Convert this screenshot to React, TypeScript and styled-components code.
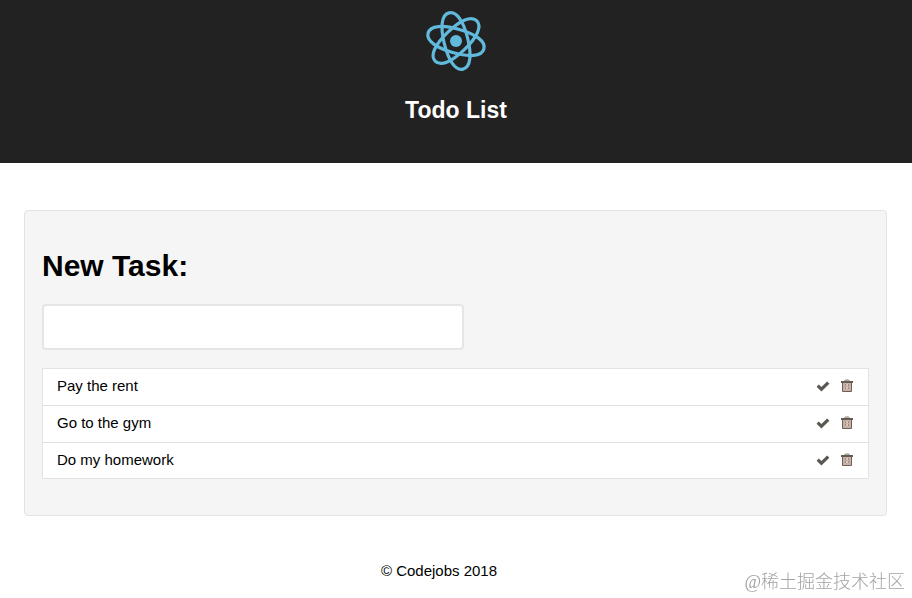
import React, { useState } from 'react';
import styled, { createGlobalStyle } from 'styled-components';

const GlobalStyle = createGlobalStyle`
  * { box-sizing: border-box; }
  body {
    margin: 0;
    background: #fff;
    color: #000;
    font-family: "Liberation Sans", Arial, Helvetica, sans-serif;
    font-size: 15px;
    line-height: 20px;
  }
`;

const Header = styled.header`
  display: flex;
  flex-direction: column;
  align-items: center;
  gap: 16px;
  padding: 1px 20px 39px;
  background: #222;
  color: #fff;
`;

const Logo = styled.svg`
  width: 80px;
  height: 80px;
  color: #61b9dc;
`;

const Title = styled.h1`
  margin: 0;
  font-size: 23px;
  line-height: 27px;
`;

const Panel = styled.main`
  margin: 47px 25px 0 24px;
  padding: 37px 17px 36px;
  border: 1px solid #e3e3e3;
  border-radius: 4px;
  background: #f5f5f5;
`;

const TaskLabel = styled.label`
  display: block;
  margin-bottom: 21px;
  font-size: 30px;
  font-weight: bold;
  line-height: 35px;
`;

const TaskInput = styled.input`
  display: block;
  width: 51%;
  height: 46px;
  padding: 8px 12px;
  border: 2px solid #e5e5e5;
  border-radius: 4px;
  background: #fff;
  font: inherit;
  outline: none;
`;

const TaskList = styled.ul`
  margin: 18px 0 0;
  padding: 0;
  border: 1px solid #e3e3e3;
  background: #fff;
  list-style: none;
`;

const TaskRow = styled.li`
  display: flex;
  align-items: center;
  justify-content: space-between;
  padding: 7px 14px 9px;

  & + & {
    border-top: 1px solid #e0e0e0;
  }

  &:last-child {
    padding-bottom: 8px;
  }
`;

const TaskText = styled.span<{ $done: boolean }>`
  text-decoration: ${({ $done }) => ($done ? 'line-through' : 'none')};
`;

const Actions = styled.div`
  display: flex;
  gap: 10px;
`;

const IconButton = styled.button`
  display: flex;
  width: 14px;
  height: 16px;
  padding: 0;
  border: 0;
  background: none;
  cursor: pointer;
`;

const Icon = styled.svg`
  width: 14px;
  height: 16px;
`;

const Footer = styled.footer`
  padding: 45px 58px 0 24px;
  text-align: center;
`;

const Watermark = styled.div`
  position: fixed;
  right: 7px;
  bottom: 3px;
  color: #a3a3a3;
  font-family: "Liberation Serif", "Noto Sans CJK SC", serif;
  font-size: 18px;
  font-weight: 300;
  line-height: 26px;
`;

function Atom() {
  return (
    <Logo viewBox="-40 -40 80 80" fill="none" stroke="currentColor" strokeWidth="3.2" aria-hidden="true">
      {[16, 76, 136].map((angle) => (
        <path
          key={angle}
          d="M-29 0C-29-8-17-12 0-12S29-8 29 0 17 12 0 12-29 8-29 0Z"
          transform={`rotate(${angle})`}
        />
      ))}
      <circle r="6" fill="currentColor" stroke="none" />
    </Logo>
  );
}

function CheckIcon() {
  return (
    <Icon viewBox="0 0 14 16" aria-hidden="true">
      <path d="M.6 8.7 2.8 6.5l2.6 2.4 5.7-5.4 2.3 2.3-8 7.6Z" fill="#5b5852" />
    </Icon>
  );
}

function TrashIcon() {
  return (
    <Icon viewBox="0 0 14 16" aria-hidden="true">
      <path d="M4 3C4 .5 10 .5 10 3Z" fill="#b0ada0" />
      <path d="M2.5 4.5h9v9h-9Z" fill="#c9b0a5" stroke="#6b6059" />
      <path d="M1 3h12v2H1Z" fill="#625c55" />
      <path d="M5.5 6v6M8.5 6v6" stroke="#a08a80" strokeDasharray="2 1" />
      <path d="M7 6v6" stroke="#e9dcd6" strokeDasharray="2 1" />
    </Icon>
  );
}

const initialTasks = [
  { id: 1, text: 'Pay the rent', done: false },
  { id: 2, text: 'Go to the gym', done: false },
  { id: 3, text: 'Do my homework', done: false },
];

export default function App() {
  const [tasks, setTasks] = useState(initialTasks);
  const [draft, setDraft] = useState('');

  const addTask = (event: React.FormEvent) => {
    event.preventDefault();
    if (draft.trim()) {
      setTasks([...tasks, { id: Date.now(), text: draft.trim(), done: false }]);
      setDraft('');
    }
  };

  const toggleTask = (id: number) =>
    setTasks(tasks.map((task) => (task.id === id ? { ...task, done: !task.done } : task)));

  const removeTask = (id: number) => setTasks(tasks.filter((task) => task.id !== id));

  return (
    <>
      <GlobalStyle />
      <Header>
        <Atom />
        <Title>Todo List</Title>
      </Header>
      <Panel>
        <form onSubmit={addTask}>
          <TaskLabel htmlFor="new-task">New Task:</TaskLabel>
          <TaskInput id="new-task" value={draft} onChange={(event) => setDraft(event.target.value)} />
        </form>
        <TaskList>
          {tasks.map((task) => (
            <TaskRow key={task.id}>
              <TaskText $done={task.done}>{task.text}</TaskText>
              <Actions>
                <IconButton type="button" aria-label={`Complete ${task.text}`} onClick={() => toggleTask(task.id)}>
                  <CheckIcon />
                </IconButton>
                <IconButton type="button" aria-label={`Delete ${task.text}`} onClick={() => removeTask(task.id)}>
                  <TrashIcon />
                </IconButton>
              </Actions>
            </TaskRow>
          ))}
        </TaskList>
      </Panel>
      <Footer>© Codejobs 2018</Footer>
      <Watermark>@稀土掘金技术社区</Watermark>
    </>
  );
}
